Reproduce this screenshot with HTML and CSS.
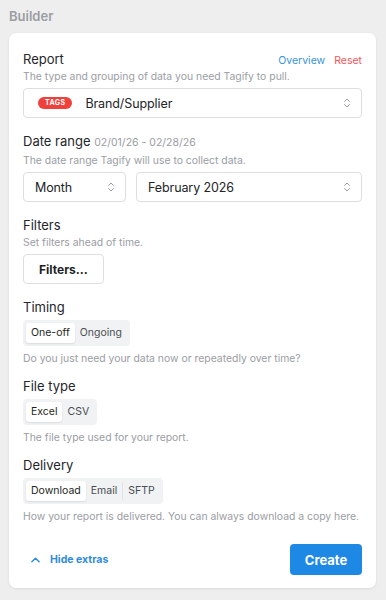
FILE: index.html
```html
<!DOCTYPE html>
<html>
<head>
<meta charset="utf-8">
<link rel="stylesheet" href="styles.css">
</head>
<body>
<div class="page">
  <h1 class="page-title">Builder</h1>
  <div class="card">
    <section class="field">
      <div class="field-head">
        <span class="label">Report</span>
        <span class="links"><a class="link-blue">Overview</a><a class="link-red">Reset</a></span>
      </div>
      <p class="help">The type and grouping of data you need Tagify to pull.</p>
      <div class="select select-full">
        <span class="badge">TAGS</span>
        <span class="select-text">Brand/Supplier</span>
        <svg class="updown" viewBox="0 0 8 12" width="8" height="12"><path d="M1.5 4.5L4 2l2.5 2.5M1.5 7.5L4 10l2.5-2.5" fill="none" stroke="#9aa0a8" stroke-width="1" stroke-linecap="round" stroke-linejoin="round"/></svg>
      </div>
    </section>

    <section class="field">
      <div class="field-head">
        <span class="label">Date range <span class="label-note">02/01/26 - 02/28/26</span></span>
      </div>
      <p class="help">The date range Tagify will use to collect data.</p>
      <div class="select-row">
        <div class="select select-month">
          <span class="select-text">Month</span>
          <svg class="updown" viewBox="0 0 8 12" width="8" height="12"><path d="M1.5 4.5L4 2l2.5 2.5M1.5 7.5L4 10l2.5-2.5" fill="none" stroke="#9aa0a8" stroke-width="1" stroke-linecap="round" stroke-linejoin="round"/></svg>
        </div>
        <div class="select select-grow">
          <span class="select-text">February 2026</span>
          <svg class="updown" viewBox="0 0 8 12" width="8" height="12"><path d="M1.5 4.5L4 2l2.5 2.5M1.5 7.5L4 10l2.5-2.5" fill="none" stroke="#9aa0a8" stroke-width="1" stroke-linecap="round" stroke-linejoin="round"/></svg>
        </div>
      </div>
    </section>

    <section class="field">
      <div class="field-head"><span class="label">Filters</span></div>
      <p class="help">Set filters ahead of time.</p>
      <button class="btn-outline">Filters...</button>
    </section>

    <section class="field field-seg">
      <div class="field-head"><span class="label">Timing</span></div>
      <div class="seg">
        <span class="seg-item active">One-off</span>
        <span class="seg-item">Ongoing</span>
      </div>
      <p class="help help-after">Do you just need your data now or repeatedly over time?</p>
    </section>

    <section class="field field-seg">
      <div class="field-head"><span class="label">File type</span></div>
      <div class="seg">
        <span class="seg-item active">Excel</span>
        <span class="seg-item">CSV</span>
      </div>
      <p class="help help-after">The file type used for your report.</p>
    </section>

    <section class="field field-seg">
      <div class="field-head"><span class="label">Delivery</span></div>
      <div class="seg">
        <span class="seg-item active">Download</span>
        <span class="seg-item">Email</span>
        <span class="seg-item divided">SFTP</span>
      </div>
      <p class="help help-after">How your report is delivered. You can always download a copy here.</p>
    </section>

    <div class="footer">
      <a class="extras">
        <svg viewBox="0 0 10 6" width="9" height="6"><path d="M1 5l4-4 4 4" fill="none" stroke="#2f8be0" stroke-width="1.6" stroke-linecap="round" stroke-linejoin="round"/></svg>
        <span>Hide extras</span>
      </a>
      <button class="btn-primary">Create</button>
    </div>
  </div>
</div>
</body>
</html>
```

FILE: styles.css
```css
* { box-sizing: border-box; }
html, body { margin: 0; padding: 0; }
body {
  background: #eeeeee;
  font-family: Inter, "Noto Sans", "Liberation Sans", sans-serif;
  color: #222428;
}
.page {
  padding: 6px 10px 12px 9px;
}
.page-title {
  margin: 0 0 7px 0;
  font-size: 13px;
  line-height: 20px;
  font-weight: 600;
  color: #9b9ea4;
}
.card {
  background: #ffffff;
  border-radius: 7px;
  box-shadow: 0 1px 3px rgba(0,0,0,0.08);
  padding: 17px 14px 13px 14px;
  display: flex;
  flex-direction: column;
}
.field { margin-bottom: 14px; }
.field-seg { margin-bottom: 11px; }
.field-head {
  display: flex;
  justify-content: space-between;
  align-items: baseline;
}
.label {
  font-size: 13px;
  line-height: 18px;
  color: #24262a;
}
.label-note {
  font-size: 10.5px;
  color: #9a9da3;
}
.links { display: flex; gap: 9px; font-size: 10.5px; }
.link-blue { color: #3794dc; }
.link-red { color: #f2555b; }
.help {
  margin: 1px 0 4px 0;
  font-size: 10.4px;
  line-height: 15px;
  color: #9a9da3;
}
.help-after { margin: 5px 0 0 0; }
.select {
  height: 30px;
  border: 1px solid #dcdee2;
  border-radius: 4px;
  display: flex;
  align-items: center;
  padding: 0 10px 0 11px;
  font-size: 12.5px;
  letter-spacing: -0.1px;
}
.select .select-text { flex: 1; }
.select .updown { flex: none; }
.badge {
  background: #f0403c;
  color: #ffffff;
  font-size: 7px;
  font-weight: 700;
  letter-spacing: 0.4px;
  line-height: 12px;
  height: 12px;
  padding: 0 7px;
  border-radius: 6px;
  margin: 0 13px 0 3px;
}
.select-row { display: flex; gap: 10px; }
.select-month { width: 103px; }
.select-grow { flex: 1; }
.btn-outline {
  display: block;
  font-family: inherit;
  height: 30px;
  margin-top: 0;
  padding: 0 15px;
  border: 1px solid #dcdee2;
  border-radius: 4px;
  background: #ffffff;
  font-size: 12px;
  font-weight: 700;
  color: #1d1f23;
}
.seg {
  margin-top: 4px;
  display: inline-flex;
  background: #f1f2f4;
  border-radius: 4px;
  padding: 3px;
}
.seg-item {
  font-size: 10.5px;
  line-height: 20px;
  padding: 0 5px;
  color: #4a4d52;
  border-radius: 3px;
}
.seg-item.active {
  background: #ffffff;
  color: #1d1f23;
  box-shadow: 0 1px 2px rgba(0,0,0,0.1);
}
.seg-item.divided { border-left: 1px solid #e0e2e5; }
.footer {
  display: flex;
  justify-content: space-between;
  align-items: center;
  margin-top: 9px;
}
.extras {
  display: flex;
  align-items: center;
  gap: 10px;
  padding-left: 8px;
  color: #2f8be0;
  font-size: 10.5px;
  font-weight: 700;
}
.btn-primary {
  font-family: inherit;
  height: 31px;
  width: 72px;
  border: none;
  border-radius: 4px;
  background: #1e88e5;
  color: #ffffff;
  font-size: 13px;
  font-weight: 700;
}
```
